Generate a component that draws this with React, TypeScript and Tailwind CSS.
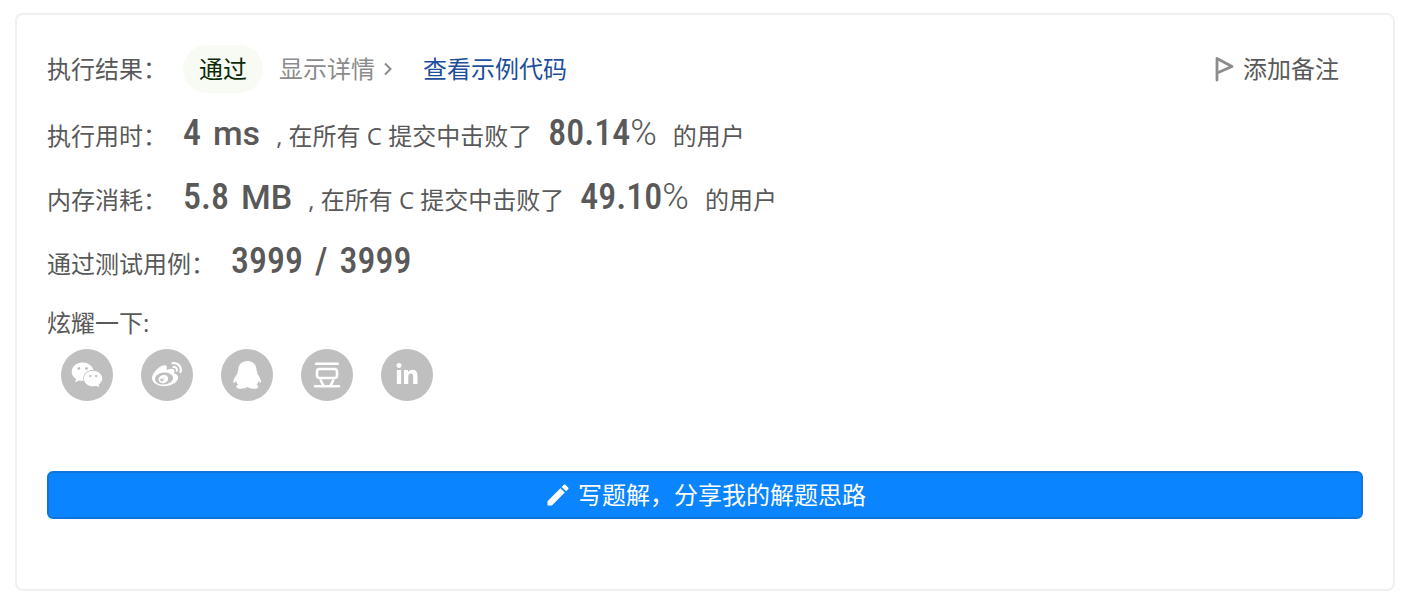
import type { ReactNode } from "react";
import { FaLinkedinIn, FaWeibo, FaWeixin } from "react-icons/fa";
import { MdEdit } from "react-icons/md";

function FlagIcon() {
  return (
    <svg viewBox="0 0 20 26" className="h-[26px] w-5" fill="none" stroke="#8c8c8c" strokeWidth="2.8" strokeLinecap="round" strokeLinejoin="round" aria-hidden="true">
      <path d="M2 24V2.5L17 10.5L2 17" />
    </svg>
  );
}

function ChevronIcon() {
  return (
    <svg viewBox="0 0 10 14" className="h-3.5 w-2.5" fill="none" stroke="#8c8c8c" strokeWidth="2" aria-hidden="true">
      <path d="M2 1.5L7.5 7L2 12.5" />
    </svg>
  );
}

function PenguinIcon() {
  return (
    <svg viewBox="0 0 82 82" className="size-7" fill="currentColor" aria-hidden="true">
      <path d="M42 0C26 0 15 11 15 27C15 30 12 32 13 37C7 44 1 53 1 60C1 66 4 66 9 58C10 64 13 67 15 69C10 71 9 75 11 78C16 83 36 82 40 77H45C49 82 68 83 73 78C75 74 73 71 69 69C72 66 74 63 75 58C79 66 82 66 82 60C82 53 77 44 71 37C72 32 69 30 69 27C69 11 58 0 42 0Z" />
    </svg>
  );
}

function DoubanIcon() {
  return (
    <svg viewBox="0 0 28 28" className="size-7" fill="none" stroke="currentColor" strokeWidth="2.6" strokeLinecap="round" strokeLinejoin="round" aria-hidden="true">
      <path d="M3.2 2.8H24.8M2 25.3H26M7.8 19.5L10.4 24.6M20.2 19.5L17.6 24.6" />
      <rect x="4" y="8" width="20" height="9" rx="2.5" />
    </svg>
  );
}

function Figure({ children }: { children: ReactNode }) {
  return <strong className="font-[Roboto_Condensed,Roboto,sans-serif] text-4xl leading-[64px] font-medium">{children}</strong>;
}

function Metric({ value, unit }: { value: string; unit: string }) {
  return (
    <span className="flex items-baseline gap-3">
      <Figure>{value}</Figure>
      <strong className="font-[Roboto,sans-serif] text-[34px] leading-[64px] font-medium">{unit}</strong>
    </span>
  );
}

function Rate({ value }: { value: string }) {
  return (
    <span>
      <Figure>{value}</Figure>
      <span className="font-[Roboto,sans-serif] text-4xl leading-[64px] font-light">%</span>
    </span>
  );
}

function Row({ label, children }: { label: string; children: ReactNode }) {
  return (
    <div className="flex h-16 items-baseline gap-4 whitespace-pre leading-[64px]">
      <span>{label}</span>
      {children}
    </div>
  );
}

const shares = [
  { name: "微信", icon: <FaWeixin className="size-8" /> },
  { name: "微博", icon: <FaWeibo className="size-[30px]" /> },
  { name: "QQ", icon: <PenguinIcon /> },
  { name: "豆瓣", icon: <DoubanIcon /> },
  { name: "领英", icon: <FaLinkedinIn className="size-6" /> },
];

export default function App() {
  return (
    <main className="px-[15px] pt-[13px] pr-2.5 font-['Open_Sans','Noto_Sans_CJK_SC',sans-serif] text-2xl text-[#595959]">
      <section className="rounded-lg border-2 border-[#f0f0f0] bg-white px-[30px] pt-[30px] pb-[70px]">
        <div className="flex h-12 items-center">
          <span>执行结果：</span>
          <span className="ml-4 flex h-12 items-center rounded-full bg-[#f8fbf4] px-4 text-[#0d2b09]">通过</span>
          <a href="#detail" className="ml-4 flex items-center gap-2 text-[#8c8c8c]">
            显示详情
            <ChevronIcon />
          </a>
          <a href="#sample" className="ml-[30px] text-[#1d4f9c]">查看示例代码</a>
          <button type="button" className="mr-6 ml-auto flex items-center gap-2">
            <FlagIcon />
            添加备注
          </button>
        </div>

        <div className="mt-2">
          <Row label="执行用时：">
            <Metric value="4" unit="ms" />
            <span>, 在所有 C 提交中击败了</span>
            <Rate value="80.14" />
            <span>的用户</span>
          </Row>
          <Row label="内存消耗：">
            <Metric value="5.8" unit="MB" />
            <span>, 在所有 C 提交中击败了</span>
            <Rate value="49.10" />
            <span>的用户</span>
          </Row>
          <Row label="通过测试用例：">
            <span className="flex items-baseline gap-3">
              <Figure>3999</Figure>
              <Figure>/</Figure>
              <Figure>3999</Figure>
            </span>
          </Row>
        </div>

        <p className="mt-3 h-9 leading-9">炫耀一下:</p>
        <div className="mt-2 flex gap-7 pl-3.5">
          {shares.map((share) => (
            <button key={share.name} type="button" aria-label={share.name} className="flex size-[52px] items-center justify-center rounded-full bg-[#bfbfbf] text-white">
              {share.icon}
            </button>
          ))}
        </div>

        <button type="button" className="mt-[70px] flex h-12 w-full items-center justify-center gap-1.5 rounded-md border-2 border-[#0f75dc] bg-[#0a84ff] text-white">
          <MdEdit className="size-7" />
          写题解，分享我的解题思路
        </button>
      </section>
    </main>
  );
}
